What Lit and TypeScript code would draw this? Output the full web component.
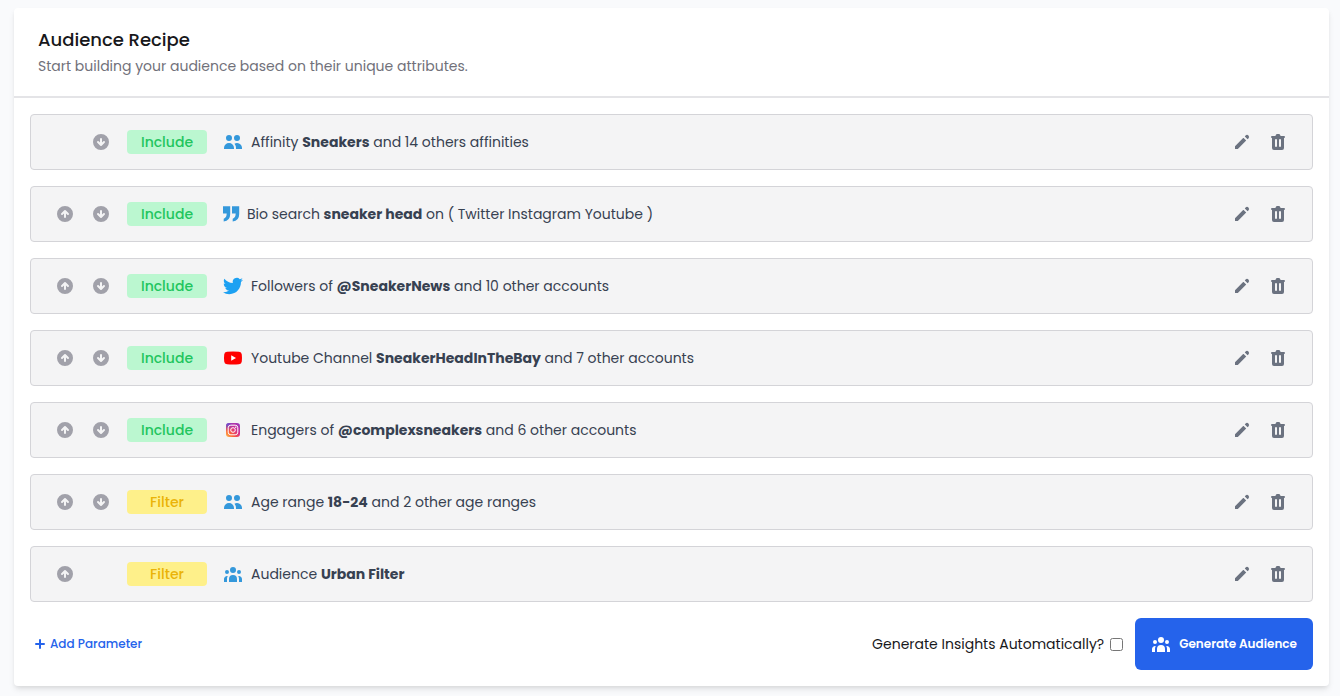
import { LitElement, html, css, svg, nothing } from "lit";
import { customElement } from "lit/decorators.js";
import { classMap } from "lit/directives/class-map.js";

type Part = string | { b: string };
interface Recipe {
  kind: "Include" | "Filter";
  icon: string;
  parts: Part[];
}

const RECIPE: Recipe[] = [
  { kind: "Include", icon: "users", parts: ["Affinity ", { b: "Sneakers" }, " and 14 others affinities"] },
  { kind: "Include", icon: "quote", parts: ["Bio search ", { b: "sneaker head" }, " on ( Twitter Instagram Youtube )"] },
  { kind: "Include", icon: "twitter", parts: ["Followers of ", { b: "@SneakerNews" }, " and 10 other accounts"] },
  { kind: "Include", icon: "youtube", parts: ["Youtube Channel ", { b: "SneakerHeadInTheBay" }, " and 7 other accounts"] },
  { kind: "Include", icon: "instagram", parts: ["Engagers of ", { b: "@complexsneakers" }, " and 6 other accounts"] },
  { kind: "Filter", icon: "users", parts: ["Age range ", { b: "18-24" }, " and 2 other age ranges"] },
  { kind: "Filter", icon: "group", parts: ["Audience ", { b: "Urban Filter" }] },
];

const SHAPES: Record<string, unknown> = {
  users: svg`<path d="M9 6a3 3 0 11-6 0 3 3 0 016 0zM17 6a3 3 0 11-6 0 3 3 0 016 0zM12.93 17c.046-.327.07-.66.07-1a6.97 6.97 0 00-1.5-4.33A5 5 0 0119 16v1h-6.07zM6 11a5 5 0 015 5v1H1v-1a5 5 0 015-5z"/>`,
  group: svg`<path d="M13 6a3 3 0 11-6 0 3 3 0 016 0zM18 8a2 2 0 11-4 0 2 2 0 014 0zM14 15a4 4 0 00-8 0v3h8v-3zM6 8a2 2 0 11-4 0 2 2 0 014 0zM16 18v-3a5.972 5.972 0 00-.75-2.906A3.005 3.005 0 0119 15v3h-3zM4.75 12.094A5.973 5.973 0 004 15v3H1v-3a3 3 0 013.75-2.906z"/>`,
  up: svg`<path fill-rule="evenodd" d="M10 18a8 8 0 100-16 8 8 0 000 16zm3.707-8.707l-3-3a1 1 0 00-1.414 0l-3 3a1 1 0 001.414 1.414L9 9.414V13a1 1 0 102 0V9.414l1.293 1.293a1 1 0 001.414-1.414z"/>`,
  down: svg`<path fill-rule="evenodd" d="M10 18a8 8 0 100-16 8 8 0 000 16zm1-11a1 1 0 10-2 0v3.586L7.707 9.293a1 1 0 00-1.414 1.414l3 3a1 1 0 001.414 0l3-3a1 1 0 00-1.414-1.414L11 10.586V7z"/>`,
  plus: svg`<path d="M10 5a1 1 0 011 1v3h3a1 1 0 110 2h-3v3a1 1 0 11-2 0v-3H6a1 1 0 110-2h3V6a1 1 0 011-1z"/>`,
  pencil: svg`<path d="M13.586 3.586a2 2 0 112.828 2.828l-.793.793-2.828-2.828.793-.793zM11.379 5.793L3 14.172V17h2.828l8.38-8.379-2.83-2.828z"/>`,
  trash: svg`<path fill-rule="evenodd" d="M9 2a1 1 0 00-.894.553L7.382 4H4a1 1 0 000 2v10a2 2 0 002 2h8a2 2 0 002-2V6a1 1 0 100-2h-3.382l-.724-1.447A1 1 0 0011 2H9zM7 8a1 1 0 012 0v6a1 1 0 11-2 0V8zm5-1a1 1 0 00-1 1v6a1 1 0 102 0V8a1 1 0 00-1-1z"/>`,
  quote: svg`<path d="M0 2.300h7.200v7.700q0 6.700-6.500 7.600v-2.900q2.800-.7 3-5.200H0zM9 2.300h7.200v7.700q0 6.700-6.500 7.600v-2.900q2.800-.7 3-5.200H9z"/>`,
  twitter: svg`<path transform="scale(.8333)" d="M23.953 4.570a10 10 0 01-2.825.775 4.958 4.958 0 002.163-2.723c-.951.555-2.005.959-3.127 1.184a4.920 4.920 0 00-8.384 4.482C7.690 8.095 4.067 6.130 1.640 3.162a4.822 4.822 0 00-.666 2.475c0 1.710.870 3.213 2.188 4.096a4.904 4.904 0 01-2.228-.616v.060a4.923 4.923 0 003.946 4.827 4.996 4.996 0 01-2.212.085 4.936 4.936 0 004.604 3.417 9.867 9.867 0 01-6.102 2.105c-.390 0-.779-.023-1.170-.067a13.995 13.995 0 007.557 2.209c9.053 0 13.998-7.496 13.998-13.985 0-.210 0-.420-.015-.630A9.935 9.935 0 0024 4.590z"/>`,
  youtube: svg`<path fill="#f00" d="M4 3.800q6-.5 12 0 2.600.2 2.800 2.700.4 3.500 0 7-.2 2.500-2.800 2.700-6 .5-12 0-2.600-.2-2.800-2.700-.4-3.500 0-7 .2-2.500 2.800-2.700z"/><path fill="#fff" d="M8.200 7.300v5.400l4.800-2.700z"/>`,
  instagram: svg`<defs><linearGradient id="ig" x1="0" y1="1" x2="1" y2="0"><stop offset="0" stop-color="#fdc04c"/><stop offset=".3" stop-color="#fb5b3a"/><stop offset=".6" stop-color="#d62e8c"/><stop offset="1" stop-color="#8a3ac8"/></linearGradient><radialGradient id="ib" cx=".05" cy="0" r=".6"><stop offset="0" stop-color="#3f5bf0"/><stop offset="1" stop-color="#8a3ac8" stop-opacity="0"/></radialGradient></defs><rect x="3" y="3" width="14" height="14" rx="3.200" fill="url(#ig)"/><rect x="3" y="3" width="14" height="14" rx="3.200" fill="url(#ib)"/><rect x="5.200" y="5.200" width="9.600" height="9.600" rx="2.600" fill="none" stroke="#fff"/><circle cx="10" cy="10" r="2.300" fill="none" stroke="#fff"/><circle cx="12.700" cy="7.300" r=".7" fill="#fff"/>`,
};

const icon = (name: string) => {
  const width = name === "quote" ? 16 : 20;
  return html`<svg class=${name} viewBox="0 0 ${width} 20" width=${width} height="20" aria-hidden="true">${SHAPES[name]}</svg>`;
};

@customElement("recipe-row")
class RecipeRow extends LitElement {
  static properties = {
    item: { attribute: false },
    first: { type: Boolean },
    last: { type: Boolean },
  };
  declare item: Recipe;
  declare first: boolean;
  declare last: boolean;

  static styles = css`
    :host {
      display: flex;
      align-items: center;
      box-sizing: border-box;
      min-height: 56px;
      padding: 8px 24px;
      border: 1px solid #d4d4d8;
      border-radius: 4px;
      background: #f4f4f5;
    }
    svg {
      display: block;
      flex: none;
      overflow: visible;
      fill: currentColor;
    }
    button {
      padding: 0;
      border: 0;
      background: none;
      color: #a1a1aa;
      cursor: pointer;
    }
    .moves {
      display: grid;
      grid-template-columns: 20px 20px;
      gap: 16px;
      margin-right: 16px;
    }
    .down {
      grid-column: 2;
    }
    .badge {
      width: 80px;
      margin-right: 16px;
      border-radius: 4px;
      font-weight: 500;
      line-height: 24px;
      text-align: center;
    }
    .include {
      background: #bbf7d0;
      color: #22c55e;
    }
    .filter {
      background: #fef08a;
      color: #eab308;
    }
    .text {
      display: flex;
      align-items: center;
      gap: 8px;
      flex: 1;
      color: #374151;
      line-height: 20px;
    }
    .text svg {
      color: #3498db;
    }
    .text .twitter {
      color: #1da1f2;
    }
    b {
      font-weight: 700;
    }
    .actions {
      display: flex;
      gap: 16px;
    }
    .actions button {
      color: #6b7280;
    }
  `;

  render() {
    const { kind, parts } = this.item;
    return html`
      <div class="moves">
        ${this.first ? nothing : html`<button class="up" aria-label="Move up">${icon("up")}</button>`}
        ${this.last ? nothing : html`<button class="down" aria-label="Move down">${icon("down")}</button>`}
      </div>
      <span class=${classMap({ badge: true, include: kind === "Include", filter: kind === "Filter" })}>${kind}</span>
      <div class="text">
        ${icon(this.item.icon)}
        <span>${parts.map((p) => (typeof p === "string" ? p : html`<b>${p.b}</b>`))}</span>
      </div>
      <div class="actions">
        <button aria-label="Edit">${icon("pencil")}</button>
        <button aria-label="Delete">${icon("trash")}</button>
      </div>
    `;
  }
}

@customElement("app-root")
class AppRoot extends LitElement {
  static styles = css`
    :host {
      display: block;
      box-sizing: border-box;
      min-height: 100vh;
      padding: 8px 11px 10px 14px;
      background: #f9fafc;
      font-family: Poppins, Inter, sans-serif;
      font-size: 14px;
      color: #18181b;
    }
    .card {
      border-radius: 4px;
      background: #fff;
      box-shadow: 0 4px 6px -1px rgba(0, 0, 0, 0.1), 0 2px 4px -1px rgba(0, 0, 0, 0.06);
    }
    header {
      padding: 20px 24px;
      border-bottom: 2px solid #e4e4e7;
    }
    h1 {
      margin: 0;
      font-size: 18px;
      font-weight: 500;
      line-height: 24px;
    }
    p {
      margin: 4px 0 0;
      color: #71717a;
      line-height: 20px;
    }
    .body {
      display: flex;
      flex-direction: column;
      gap: 16px;
      padding: 16px;
    }
    footer {
      display: flex;
      align-items: center;
      justify-content: space-between;
    }
    svg {
      display: block;
      flex: none;
      fill: currentColor;
    }
    button {
      display: flex;
      align-items: center;
      border: 0;
      font-family: inherit;
      font-size: 12px;
      cursor: pointer;
    }
    .add {
      padding: 0;
      background: none;
      color: #2563eb;
      font-weight: 500;
    }
    .right {
      display: flex;
      align-items: center;
      gap: 12px;
    }
    label {
      display: flex;
      align-items: center;
      gap: 6px;
    }
    input {
      width: 13px;
      height: 13px;
      margin: 0;
    }
    .primary {
      gap: 8px;
      height: 52px;
      padding: 0 16px;
      border-radius: 6px;
      background: #2563eb;
      color: #fff;
      font-weight: 600;
    }
  `;

  render() {
    return html`
      <section class="card">
        <header>
          <h1>Audience Recipe</h1>
          <p>Start building your audience based on their unique attributes.</p>
        </header>
        <div class="body">
          ${RECIPE.map(
            (item, i) => html`<recipe-row .item=${item} ?first=${i === 0} ?last=${i === RECIPE.length - 1}></recipe-row>`
          )}
          <footer>
            <button class="add">${icon("plus")}Add Parameter</button>
            <div class="right">
              <label for="auto">Generate Insights Automatically?<input id="auto" type="checkbox" /></label>
              <button class="primary">${icon("group")}Generate Audience</button>
            </div>
          </footer>
        </div>
      </section>
    `;
  }
}
